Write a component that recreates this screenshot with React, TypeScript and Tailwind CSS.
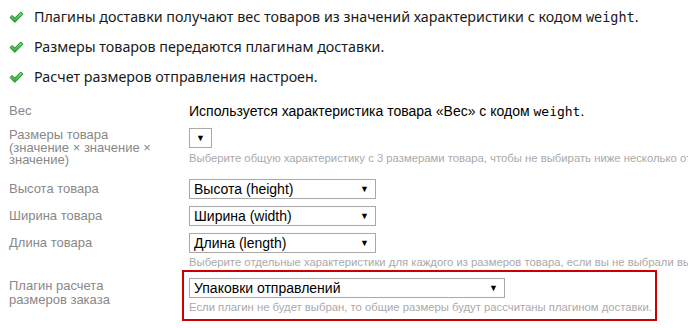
import React from 'react';

const Check: React.FC = () => (
  <svg width="15" height="13" viewBox="0 0 15 13" className="shrink-0">
    <defs>
      <linearGradient id="chk" x1="0" y1="0" x2="0" y2="1">
        <stop offset="0" stopColor="#7fdc7f" />
        <stop offset="1" stopColor="#2aa52a" />
      </linearGradient>
    </defs>
    <path
      d="M1 6.5 L3.2 4.4 L5.8 7 L11.8 1 L14 3.2 L5.8 11.4 Z"
      fill="url(#chk)"
      stroke="#1f8a2b"
      strokeWidth="1"
      strokeLinejoin="round"
    />
  </svg>
);

const Select: React.FC<{ value?: string; width: string }> = ({ value, width }) => (
  <div
    className={`${width} h-[20px] border border-[#a9a9a9] bg-white flex items-center justify-between pl-[4px] pr-[6px] text-[14px] text-black leading-none`}
  >
    <span>{value}</span>
    <span className="text-[9px] ml-auto">▼</span>
  </div>
);

const items = [
  <>
    Плагины доставки получают вес товаров из значений характеристики с кодом{' '}
    <code className="font-['DejaVu_Sans_Mono',monospace] text-[13.5px]">weight</code>.
  </>,
  <>Размеры товаров передаются плагинам доставки.</>,
  <>Расчет размеров отправления настроен.</>,
];

export default function App() {
  return (
    <div className="w-[688px] h-[328px] overflow-hidden bg-white pl-[9px] font-['Liberation_Sans',Arial,sans-serif]">
      <ul className="pt-[2px] font-['Noto_Sans',sans-serif] text-[14.3px] text-[#1a1a1a]">
        {items.map((t, i) => (
          <li key={i} className="h-[30px] flex items-center gap-[10px] whitespace-nowrap">
            <Check />
            <span>{t}</span>
          </li>
        ))}
      </ul>

      <div className="mt-[10px] grid grid-cols-[180px_1fr] text-[13px] text-[#888]">
        <div className="h-[26px] leading-[18px]">Вес</div>
        <div className="h-[26px] leading-[18px] text-[14px] text-black whitespace-nowrap">
          Используется характеристика товара «Вес» с кодом{' '}
          <code className="font-['DejaVu_Sans_Mono',monospace] text-[13px]">weight</code>.
        </div>

        <div className="pt-[1px] leading-[12.5px] w-[152px]">
          Размеры товара (значение × значение × значение)
        </div>
        <div className="pb-[14px]">
          <Select width="w-[23px]" />
          <div className="mt-[3px] text-[11.3px] leading-[14px] text-[#aaa] whitespace-nowrap">
            Выберите общую характеристику с 3 размерами товара, чтобы не выбирать ниже несколько отдельных характеристик.
          </div>
        </div>

        <div className="leading-[20px]">Высота товара</div>
        <div className="pb-[7px]">
          <Select width="w-[187px]" value="Высота (height)" />
        </div>

        <div className="leading-[20px]">Ширина товара</div>
        <div className="pb-[7px]">
          <Select width="w-[187px]" value="Ширина (width)" />
        </div>

        <div className="leading-[20px]">Длина товара</div>
        <div>
          <Select width="w-[187px]" value="Длина (length)" />
          <div className="mt-[2px] text-[11.3px] leading-[15px] text-[#aaa] whitespace-nowrap">
            Выберите отдельные характеристики для каждого из размеров товара, если вы не выбрали выше общую характеристику.
          </div>
        </div>

        <div className="pt-[9px] leading-[14px]">
          Плагин расчета
          <br />
          размеров заказа
        </div>
        <div className="-ml-[7px] w-[475px] border-2 border-[#cc0000] pt-[6px] pl-[5px] pb-[4px]">
          <Select width="w-[316px]" value="Упаковки отправлений" />
          <div className="mt-[2px] text-[11.3px] leading-[15px] text-[#aaa] whitespace-nowrap">
            Если плагин не будет выбран, то общие размеры будут рассчитаны плагином доставки.
          </div>
        </div>
      </div>
    </div>
  );
}
